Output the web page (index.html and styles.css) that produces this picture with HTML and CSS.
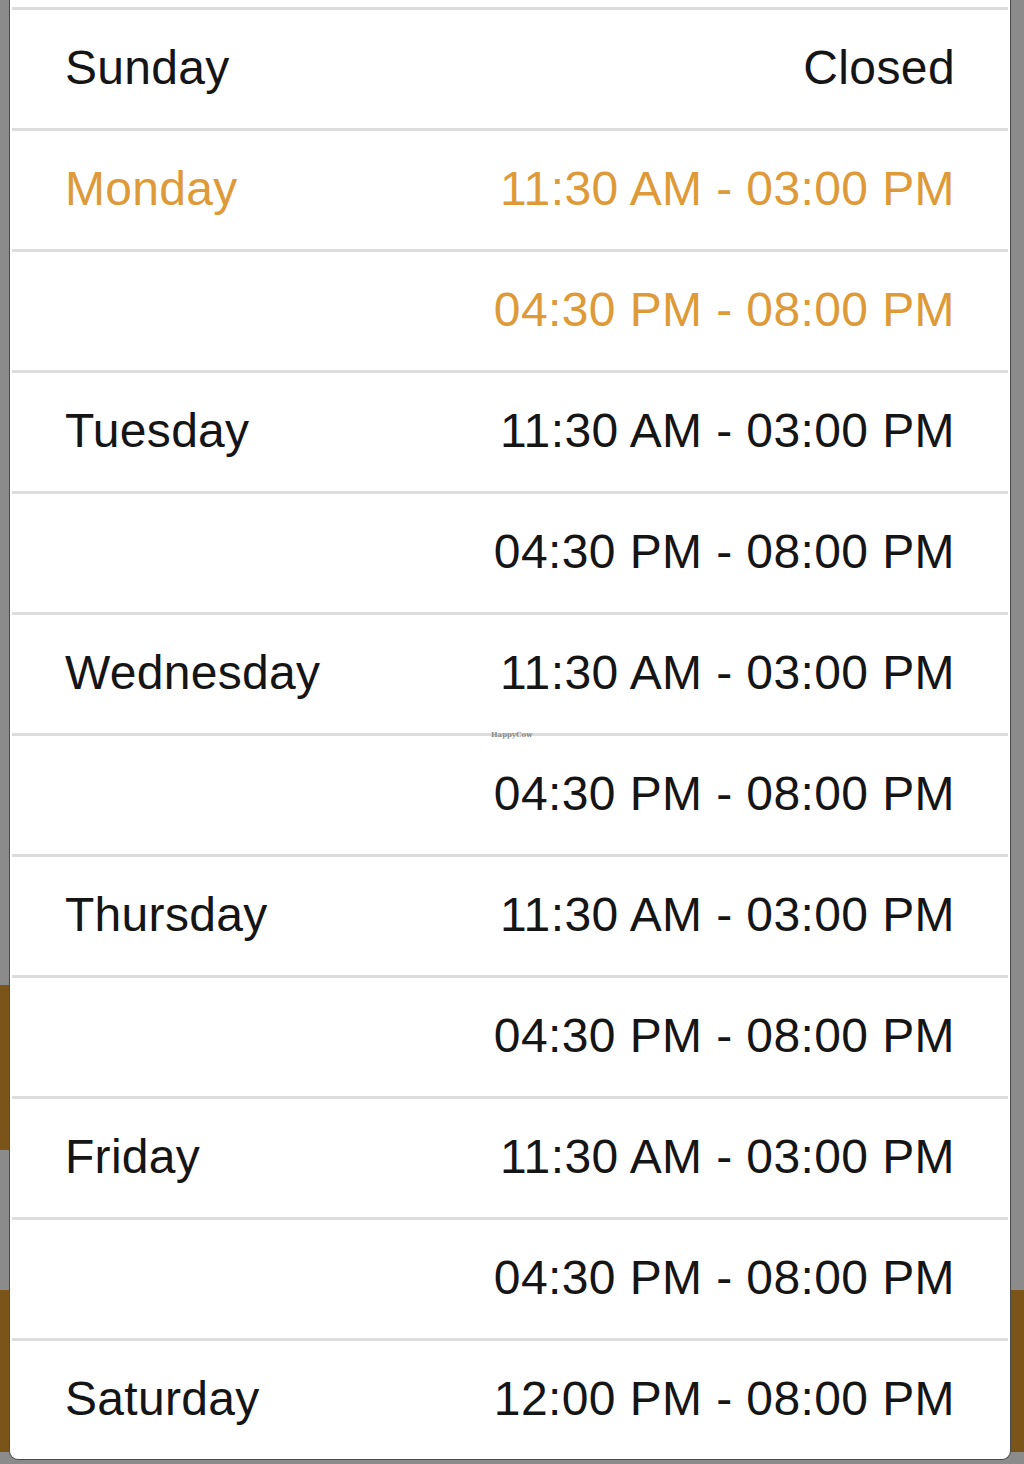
FILE: index.html
```html
<!DOCTYPE html>
<html>
<head>
<meta charset="utf-8">
<link rel="stylesheet" href="styles.css">
</head>
<body>
<div class="backdrop">
  <div class="panel">
    <div class="row"><span class="day">Sunday</span><span class="time">Closed</span></div>
    <div class="row today"><span class="day">Monday</span><span class="time">11:30 AM - 03:00 PM</span></div>
    <div class="row today"><span class="day"></span><span class="time">04:30 PM - 08:00 PM</span></div>
    <div class="row"><span class="day">Tuesday</span><span class="time">11:30 AM - 03:00 PM</span></div>
    <div class="row"><span class="day"></span><span class="time">04:30 PM - 08:00 PM</span></div>
    <div class="row"><span class="day">Wednesday</span><span class="time">11:30 AM - 03:00 PM</span></div>
    <div class="row mark"><span class="day"></span><span class="time">04:30 PM - 08:00 PM</span><span class="watermark">HappyCow</span></div>
    <div class="row"><span class="day">Thursday</span><span class="time">11:30 AM - 03:00 PM</span></div>
    <div class="row"><span class="day"></span><span class="time">04:30 PM - 08:00 PM</span></div>
    <div class="row"><span class="day">Friday</span><span class="time">11:30 AM - 03:00 PM</span></div>
    <div class="row"><span class="day"></span><span class="time">04:30 PM - 08:00 PM</span></div>
    <div class="row"><span class="day">Saturday</span><span class="time">12:00 PM - 08:00 PM</span></div>
  </div>
</div>
</body>
</html>
```
FILE: styles.css
```css
html, body {
  margin: 0;
  padding: 0;
  background: #8b8b8b;
}
.backdrop {
  width: 1024px;
  height: 1464px;
  box-sizing: border-box;
  padding: 0 13px 0 9px;
  background:
    linear-gradient(to bottom, transparent 985px, #7a5418 985px, #7a5418 1150px, transparent 1150px, transparent 1290px, #7a5418 1290px, #7a5418 1452px, transparent 1452px) left top / 9px 100% no-repeat,
    linear-gradient(to bottom, transparent 1290px, #7a5418 1290px, #7a5418 1452px, transparent 1452px) right top / 13px 100% no-repeat,
    #8b8b8b;
  overflow: hidden;
}
.panel {
  background: #fff;
  border-left: 1px solid #4a4a4a;
  border-right: 1px solid #4a4a4a;
  border-bottom: 1px solid #4a4a4a;
  border-radius: 0 0 9px 9px;
  padding-top: 7px;
  font-family: "Liberation Sans", Arial, sans-serif;
  font-size: 48px;
  color: #151515;
}
.row {
  position: relative;
  height: 121px;
  box-sizing: border-box;
  border-top: 3px solid #dcdcdc;
  margin: 0 2px;
  display: flex;
  align-items: center;
  justify-content: space-between;
  padding: 0 53px 3px 53px;
}
.today {
  color: #de9a38;
}
.day {
  letter-spacing: 0.3px;
}
.time {
  letter-spacing: 0.4px;
}
.watermark {
  position: absolute;
  left: 479px;
  top: -6px;
  font-family: "DejaVu Serif", serif;
  font-weight: bold;
  font-size: 7px;
  color: #8a8a8a;
  letter-spacing: 0;
}
```
